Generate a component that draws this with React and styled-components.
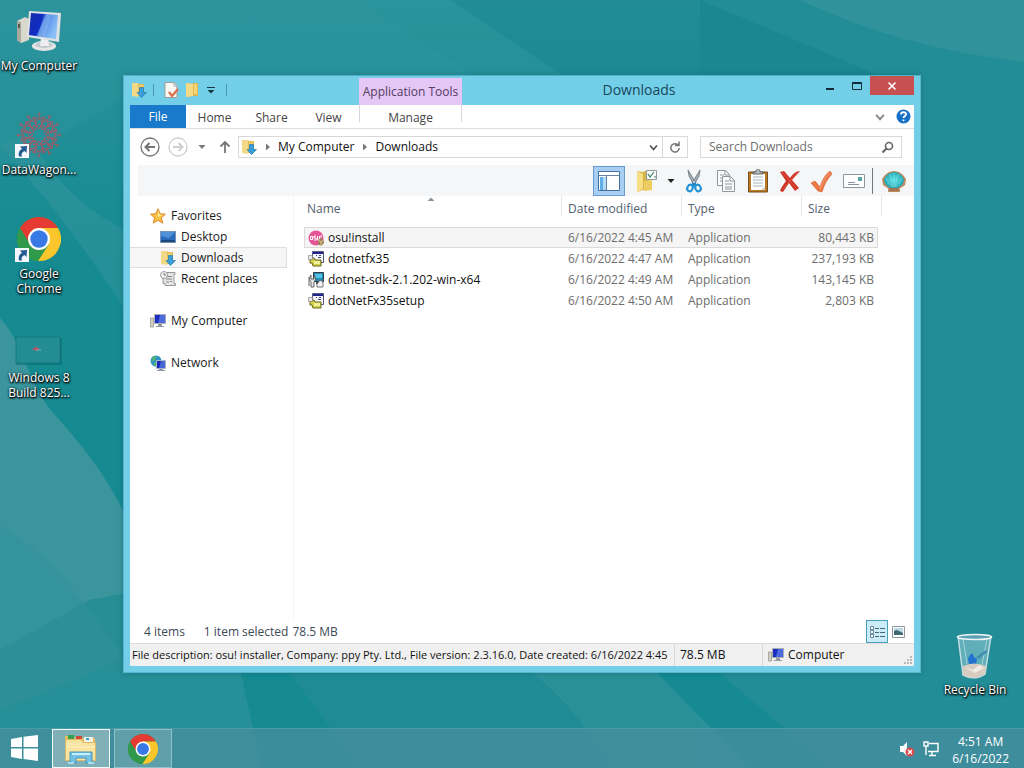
import React from "react";
import styled, { createGlobalStyle } from "styled-components";

const GlobalStyle = createGlobalStyle`
    *, *::before, *::after {
        box-sizing: border-box;
    }
    body {
        margin: 0;
        font-family: "Open Sans", "Noto Sans", sans-serif;
        font-size: 12px;
        line-height: 16px;
        color: #1a1a1a;
    }
    button, input {
        font: inherit;
        color: inherit;
        border: none;
        background: none;
        padding: 0;
        margin: 0;
        outline: none;
    }
    svg {
        display: block;
        flex: none;
    }
`;

const Screen = styled.div`
    position: relative;
    isolation: isolate;
    min-height: 100vh;
    display: flex;
    flex-direction: column;
    overflow: hidden;
    background-color: #17898f;
`;

const WallpaperSvg = styled.svg`
    position: absolute;
    inset: 0;
    width: 100%;
    height: 100%;
    z-index: -1;
`;

const DesktopArea = styled.main`
    flex: 1;
    display: grid;
    grid-template-columns: 123px minmax(0, 1fr) 103px;
`;

const IconColumn = styled.div`
    display: flex;
    flex-direction: column;
    justify-content: ${(p) => (p.$bottom ? "flex-end" : "flex-start")};
    align-items: ${(p) => (p.$bottom ? "flex-end" : "flex-start")};
    padding: ${(p) => (p.$bottom ? "0 10px 0 0" : "8px 0 0")};
`;

const DesktopIcon = styled.button`
    width: 78px;
    height: ${(p) => (p.$short ? 96 : 104)}px;
    display: flex;
    flex-direction: column;
    align-items: center;
    cursor: default;
`;

const IconLabel = styled.span`
    margin-top: 2px;
    line-height: 15px;
    color: #fff;
    text-align: center;
    white-space: pre-line;
    text-shadow: 1px 1px 2px #000, 0 1px 2px #000, 0 0 3px #00000099;
`;

const ExplorerWindow = styled.section`
    display: flex;
    flex-direction: column;
    margin: 75px 0 55px;
    padding: 0 6px 6px;
    min-width: 0;
    background-color: #73cfe8;
    border: 1px solid #59b4cd;
    border-top-color: #4fb0c8;
    box-shadow: 0 0 5px #0e5f6a88;
`;

const TitleBar = styled.header`
    display: flex;
    height: 29px;
`;

const QuickAccess = styled.div`
    flex: 0 0 229px;
    display: flex;
    align-items: center;
    padding-bottom: 2px;
`;

const QuickButton = styled.button`
    width: ${(p) => p.$width || 21}px;
    height: 20px;
    display: flex;
    align-items: center;
    justify-content: center;
`;

const QuickDivider = styled.span`
    width: 1px;
    height: 12px;
    margin: 0 6px;
    background-color: #4a98b0;
`;

const ToolsLabel = styled.div`
    flex: 0 0 103px;
    margin-top: 2px;
    padding-top: 6px;
    text-align: center;
    color: #51405f;
    background-color: #e5c6f5;
`;

const WindowTitle = styled.h1`
    flex: 1;
    margin: 0;
    padding-top: 4px;
    font-size: 14px;
    font-weight: 400;
    line-height: 20px;
    text-align: center;
    color: #17485a;
`;

const WindowButton = styled.button`
    width: ${(p) => (p.$close ? 44 : 27)}px;
    height: 19px;
    display: flex;
    align-items: center;
    justify-content: center;
    background-color: ${(p) => (p.$close ? "#c75052" : "transparent")};
`;

const WindowContent = styled.div`
    flex: 1;
    display: flex;
    flex-direction: column;
    background-color: #fff;
`;

const RibbonTabs = styled.nav`
    display: flex;
    height: 24px;
    border-bottom: 1px solid #dcdddf;
`;

const RibbonTab = styled.button`
    width: 57px;
    padding-top: 3px;
    color: #444;
`;

const FileTab = styled(RibbonTab)`
    width: 56px;
    padding-top: 1px;
    color: #fff;
    background-color: #1979ca;
`;

const ContextTab = styled(RibbonTab)`
    width: 103px;
    height: 17px;
    margin: 0 0 0 2px;
    padding-top: 5px;
    border: solid #dcd3e2;
    border-width: 0 1px;
`;

const RibbonExtras = styled.div`
    display: flex;
    align-items: center;
    gap: 11px;
    margin-left: auto;
    padding-right: 3px;
`;

const AddressRow = styled.div`
    display: flex;
    align-items: center;
    height: 36px;
    padding: 0 12px 0 10px;
`;

const HistoryButtons = styled.div`
    flex: 0 0 98px;
    display: flex;
    align-items: center;
`;

const HistoryButton = styled.button`
    width: ${(p) => p.$width || 28}px;
    padding-left: ${(p) => p.$inset || 0}px;
`;

const AddressBox = styled.div`
    flex: 1;
    min-width: 0;
    display: flex;
    height: 22px;
    border: 1px solid #d9d9d9;
`;

const Crumbs = styled.div`
    flex: 1;
    display: flex;
    align-items: center;
    padding-left: 2px;
`;

const Crumb = styled.button`
    color: #111;
`;

const CrumbArrow = styled.span`
    width: 21px;
    display: flex;
    justify-content: center;
`;

const AddressButton = styled.button`
    width: ${(p) => (p.$divided ? 25 : 18)}px;
    display: flex;
    align-items: center;
    justify-content: center;
    border-left: ${(p) => (p.$divided ? "1px solid #d9d9d9" : "none")};
`;

const SearchBox = styled.label`
    flex: 0 1 202px;
    display: flex;
    align-items: center;
    height: 22px;
    margin-left: 12px;
    padding: 0 7px 0 8px;
    border: 1px solid #d9d9d9;
`;

const SearchInput = styled.input`
    flex: 1;
    min-width: 0;
    &::placeholder {
        color: #6d6d6d;
        opacity: 1;
    }
`;

const Toolbar = styled.div`
    display: flex;
    justify-content: flex-end;
    height: 31px;
    margin: 0 0 0 8px;
    padding: 1px 4px 0 0;
    background-color: #f5f6f7;
`;

const ToolButton = styled.button`
    width: ${(p) => (p.$narrow ? 15 : 32)}px;
    height: 30px;
    display: flex;
    align-items: center;
    justify-content: center;
    margin-right: ${(p) => (p.$active ? 6 : 0)}px;
    border: ${(p) => (p.$active ? "1px solid #669ccf" : "none")};
    background-color: ${(p) => (p.$active ? "#a8cef3" : "transparent")};
`;

const ToolDivider = styled.span`
    width: 1px;
    height: 26px;
    margin: 2px 5px 0 2px;
    background-color: #777;
`;

const Panes = styled.div`
    flex: 1;
    display: flex;
`;

const Sidebar = styled.nav`
    flex: 0 0 164px;
    padding-top: 9px;
    border-right: 1px solid #f5f5f5;
`;

const NavGroup = styled.div`
    margin-bottom: 21px;
`;

const NavItem = styled.button`
    width: 157px;
    height: 21px;
    display: flex;
    align-items: center;
    gap: 5px;
    padding-left: ${(p) => (p.$nested ? 30 : 20)}px;
    border: 1px solid ${(p) => (p.$selected ? "#dedede" : "transparent")};
    border-left: none;
    background-color: ${(p) => (p.$selected ? "#f6f6f6" : "transparent")};
`;

const FilePane = styled.div`
    flex: 1;
    padding-left: 10px;
`;

const FileTable = styled.table`
    width: 578px;
    table-layout: fixed;
    border-collapse: separate;
    border-spacing: 0;
`;

const HeadCell = styled.th`
    position: relative;
    height: 31px;
    padding: 5px 0 0 ${(p) => (p.$first ? 3 : 6)}px;
    vertical-align: top;
    text-align: left;
    font-weight: 400;
    color: #52606f;
    &::after {
        content: "";
        position: absolute;
        top: 0;
        right: 0;
        height: 20px;
        border-right: 1px solid ${(p) => (p.$plain ? "transparent" : "#e6e6e6")};
    }
`;

const SortMark = styled.span`
    position: absolute;
    top: 1px;
    left: 123px;
`;

const FileRow = styled.tr`
    td {
        background-color: ${(p) => (p.$selected ? "#f5f5f5" : "transparent")};
        border: solid ${(p) => (p.$selected ? "#dadada" : "transparent")};
        border-width: 1px 0;
    }
    td:first-child {
        border-left-width: 1px;
    }
    td:last-child {
        border-right-width: 1px;
    }
`;

const Cell = styled.td`
    height: 21px;
    padding: 0 3px 0 6px;
    color: #6d6d6d;
    text-align: ${(p) => (p.$right ? "right" : "left")};
    white-space: nowrap;
`;

const NameCell = styled(Cell)`
    padding-left: 3px;
    color: #111;
`;

const FileName = styled.span`
    display: flex;
    align-items: center;
    gap: 4px;
`;

const DetailsBar = styled.div`
    display: flex;
    align-items: center;
    height: 23px;
    padding: 0 8px 0 14px;
    color: #3d4a57;
`;

const DetailsText = styled.span`
    margin-right: ${(p) => p.$gap || 0}px;
`;

const ViewButtons = styled.div`
    display: flex;
    gap: 3px;
    margin-left: auto;
`;

const ViewButton = styled.button`
    width: ${(p) => (p.$active ? 22 : 15)}px;
    height: 23px;
    display: flex;
    align-items: center;
    justify-content: center;
    border: ${(p) => (p.$active ? "1px solid #4c9fb9" : "none")};
    background-color: ${(p) => (p.$active ? "#c9ecf8" : "transparent")};
`;

const StatusBar = styled.footer`
    display: flex;
    height: 23px;
    border-top: 1px solid #dcdcdc;
    background-color: #f0f0f0;
    color: #111;
`;

const StatusCell = styled.div`
    flex: ${(p) => (p.$width ? `0 0 ${p.$width}px` : "1 1 0")};
    min-width: 0;
    display: flex;
    align-items: center;
    gap: 4px;
    padding-left: 5px;
    border-left: 1px solid #d7d7d7;
    overflow: hidden;
    white-space: nowrap;
`;

const FileInfoCell = styled(StatusCell)`
    padding-left: 2px;
    border-left: none;
    font-size: 11px;
`;

const Grip = styled.span`
    display: flex;
    align-self: flex-end;
    margin-left: auto;
    padding: 2px;
`;

const Taskbar = styled.footer`
    display: flex;
    height: 40px;
    background-color: #458d9ecc;
    border-top: 1px solid #4a9ba6;
`;

const StartButton = styled.button`
    width: 52px;
    display: flex;
    align-items: center;
    padding: 0 0 2px 11px;
`;

const TaskButton = styled.button`
    width: 58px;
    height: 39px;
    display: flex;
    align-items: center;
    justify-content: center;
    margin-right: 4px;
    border: 1px solid ${(p) => (p.$active ? "#f2fbfc" : "#8fc1c9")};
    background-color: ${(p) => (p.$active ? "#7fafb7" : "#5f9faa")};
`;

const Tray = styled.div`
    display: flex;
    align-items: center;
    gap: 8px;
    margin-left: auto;
    padding-right: 15px;
`;

const Clock = styled.time`
    margin: 2px 0 0 5px;
    line-height: 17px;
    text-align: center;
    white-space: pre-line;
    color: #fff;
`;

const Wallpaper = () => (
    <WallpaperSvg viewBox="0 0 1024 768" preserveAspectRatio="none" aria-hidden="true">
        <defs>
            <linearGradient id="sky" x2="0" y2="1">
                <stop offset="0" stopColor="#2b939b" />
                <stop offset="1" stopColor="#158a91" />
            </linearGradient>
        </defs>
        <rect width="1024" height="768" fill="#158a91" />
        <rect width="1024" height="260" fill="url(#sky)" />
        <path d="M700 0H1024V768H700Z" fill="#228d96" />
        <path d="M0 0H360L480 80L130 95L0 170Z" fill="#2f959d" opacity=".45" />
        <path d="M450 0L570 80H890L700 0Z" fill="#0f8189" opacity=".35" />
        <path d="M800 0H1024V62Q900 48 800 0Z" fill="#36949c" opacity=".7" />
        <path d="M0 145Q75 230 135 325V235Q60 200 30 135Z" fill="#35959d" opacity=".5" />
        <path d="M0 318C25 345 28 385 55 415C100 465 140 520 145 590L90 600L0 650Z" fill="#42979f" opacity=".85" />
        <path d="M0 650L90 600L145 590V650L0 710Z" fill="#278e96" />
        <path d="M0 525Q60 560 125 660L238 660L262 768H0Z" fill="#31929b" opacity=".65" />
        <path d="M280 660H520Q570 690 610 768H360Z" fill="#1f8c95" />
        <path d="M515 660H645L750 768H610Q575 700 515 660Z" fill="#32939b" opacity=".7" />
        <path d="M645 660H705L830 768H750Z" fill="#168a92" />
    </WallpaperSvg>
);

const ComputerLarge = () => (
    <svg width="48" height="48" viewBox="0 0 48 48">
        <defs>
            <linearGradient id="bigScreen" x2="1" y2=".4">
                <stop offset="0" stopColor="#152da8" />
                <stop offset=".5" stopColor="#102cc5" />
                <stop offset=".55" stopColor="#4a83e6" />
                <stop offset="1" stopColor="#8bc0f6" />
            </linearGradient>
        </defs>
        <path d="M2 13L10 9L14 11V32L6 35L2 32Z" fill="#d9d8cc" />
        <path d="M2 13L6 14V35L2 32Z" fill="#aaa99d" />
        <path d="M3 16h2v4H3z" fill="#555" />
        <ellipse cx="29" cy="38" rx="12" ry="5" fill="#e5e6e5" />
        <ellipse cx="29" cy="37" rx="9" ry="3" fill="#c6cbd0" />
        <path d="M26 30h7l1 8h-9z" fill="#eee" />
        <path d="M14 3L46 5L44 34L12 29Z" fill="#dfe2e5" />
        <path d="M16 5L43 7L41 31L14 27Z" fill="url(#bigScreen)" />
        <path d="M29 6L36 7L30 29L23 28Z" fill="#adcdf3" opacity=".3" />
    </svg>
);

const Shortcut = () => (
    <g>
        <path d="M0 32H14V46H0Z" fill="#f4f8fc" />
        <path d="M4 44.500C3 40.500 4.500 38 7 37L5 34.500L12 34L11.500 41L9.500 39C7 40 6 42 7 44.500Z" fill="#265a91" />
    </g>
);

const DataWagonIcon = () => (
    <svg width="48" height="48" viewBox="0 0 48 48">
        <g fill="none" stroke="#b5505f" strokeWidth="1" opacity=".8">
            {[0, 30, 60, 90, 120, 150, 180, 210, 240, 270, 300, 330].map((angle) => (
                <g key={angle} transform={`translate(24 23) rotate(${angle})`}>
                    <path d="M0 -6L-4 -12L0 -17L4 -12ZM-3 -8L0 -11L3 -8" />
                    <path d="M0 -17V-21M-4 -12L-5 -18M4 -12L5 -18M-5 -18L0 -16L5 -18" />
                    <circle cx="0" cy="-21" r="1" />
                </g>
            ))}
        </g>
        <Shortcut />
    </svg>
);

const ChromeMark = ({ size = 44 }) => (
    <svg width={size} height={size} viewBox="0 0 44 44">
        <circle cx="22" cy="22" r="22" fill="#30994b" />
        <path d="M22 22L3 11A22 22 0 0 1 41 11L22 11Z" fill="#e53b32" />
        <path d="M22 11H41A22 22 0 0 1 21 44L32 27Z" fill="#fbc62c" />
        <path d="M3 11L13 28L22 11Z" fill="#e53b32" />
        <path d="M3 11A22 22 0 0 0 21 44L31 28L13 27Z" fill="#30994b" />
        <circle cx="22" cy="22" r="11" fill="#fff" />
        <circle cx="22" cy="22" r="8.7" fill="#3879e6" />
    </svg>
);

const ChromeLarge = () => (
    <svg width="48" height="48" viewBox="0 0 48 48">
        <svg x="2" y="1">
            <ChromeMark />
        </svg>
        <Shortcut />
    </svg>
);

const BuildThumb = () => (
    <svg width="48" height="48" viewBox="0 0 48 48">
        <path d="M1 17H45V43H1Z" fill="#248d94" stroke="#167b82" />
        <path d="M1 44H46V18" fill="none" stroke="#0b6871" />
        <path d="M17 29l4-2 4 2-4 2z" fill="#b85363" />
        <path d="M21 30h5" stroke="#84a7c9" />
    </svg>
);

const RecycleIcon = () => (
    <svg width="48" height="48" viewBox="0 0 48 48">
        <path d="M7 4L40 4L34 42Q23 49 12 43Z" fill="#8bc4d1" opacity=".6" />
        <path d="M7 4L12 43Q23 49 34 42L40 4" fill="none" stroke="#c4dce3" strokeWidth="1.5" />
        <path d="M12 7L16 32M36 7L31 33" stroke="#d3eef4" opacity=".6" />
        <path d="M18 24l3-3 2 4 3 2-1 6-7-1-1-5z" fill="#2272cf" />
        <path d="M25 25l10-7 1 2-8 7z" fill="#438fae" />
        <path d="M12 34Q23 29 35 34L34 42Q23 49 12 43Z" fill="#d8ccc1" />
        <path d="M13 35l9 3 6-5 5 3-9 5z" fill="#f0eae4" />
        <ellipse cx="23.500" cy="5" rx="17" ry="2.500" fill="#5aa0b2" stroke="#edf4f5" strokeWidth="1.700" />
    </svg>
);

const ComputerSmall = () => (
    <svg width="16" height="16" viewBox="0 0 16 16">
        <path d="M.5 5h3v9h-3z" fill="#d1d0c5" stroke="#929288" strokeWidth=".7" />
        <path d="M4.500 1.500h11v9h-11z" fill="#1b2ec0" stroke="#a9aeb5" />
        <path d="M10 2h5v8H8z" fill="#4c69dd" />
        <path d="M8 11h4v2h2v1H6v-1h2z" fill="#92999f" />
    </svg>
);

const DownloadFolder = () => (
    <svg width="16" height="16" viewBox="0 0 16 16">
        <path d="M1 1h6l1 1h5v12H2z" fill="#e1bc58" />
        <path d="M1 1h6v14l-6-1z" fill="#f3d987" />
        <path d="M8 3h4v10H7z" fill="#efcd69" />
        <path d="M8.500 5.500h4v5h3L10.500 15.500 6 10.500h2.500z" fill="#389edc" stroke="#247cae" strokeWidth=".7" />
    </svg>
);

const FolderSmall = () => (
    <svg width="16" height="16" viewBox="0 0 16 16">
        <path d="M2 1l6 1 1-1h5v13H9l-7 1z" fill="#dfb851" />
        <path d="M2 1l7 1v12l-7 1z" fill="#f6db86" />
        <path d="M10 2h3v10h-3z" fill="#f5d575" />
    </svg>
);

const PropertiesSmall = () => (
    <svg width="16" height="16" viewBox="0 0 16 16">
        <path d="M2 .5h9l3 3v12H2z" fill="#faf8f5" stroke="#a69b96" />
        <path d="M11 1v3h3" fill="none" stroke="#aaa" />
        <path d="M6 10l3 4 6-7" fill="none" stroke="#dc704a" strokeWidth="2.300" />
    </svg>
);

const DesktopSmall = () => (
    <svg width="16" height="16" viewBox="0 0 16 16">
        <path d="M.5 2.500h15v11H.5z" fill="#286bb9" stroke="#7593b8" />
        <path d="M1 3h14L9 9 1 7z" fill="#5090d8" />
        <path d="M1 11h14v2H1z" fill="#1b477f" />
    </svg>
);

const StarIcon = () => (
    <svg width="16" height="16" viewBox="0 0 16 16">
        <path d="M8 .7l2.100 5 5.300.5-4 3.600 1.300 5.300L8 12.300l-4.700 2.800 1.300-5.300-4-3.600 5.300-.5z" fill="#f9c244" stroke="#df8327" />
        <path d="M8 2l1.500 4.500L13 7 8 9z" fill="#ffe898" />
    </svg>
);

const RecentIcon = () => (
    <svg width="16" height="16" viewBox="0 0 16 16">
        <path d="M4 1.500h11v2h-1v9h1.500v2H5v-2H3V4z" fill="#e5e5e5" stroke="#979797" />
        <path d="M7 5.500h5M6 8h6M6 11h3M10 10.500h2" stroke="#858585" />
        <circle cx="4" cy="4" r="3.500" fill="#f2f2f2" stroke="#9b9b9b" />
        <path d="M4 2v2h2" fill="none" stroke="#777" />
    </svg>
);

const NetworkIcon = () => (
    <svg width="16" height="16" viewBox="0 0 16 16">
        <circle cx="6" cy="6" r="5.500" fill="#2f8fc9" />
        <path d="M3 1l4 1-2 3-4 2zM6 6l4 1-4 5-3-3z" fill="#4eb475" />
        <path d="M6.500 5.500h9v8h-9z" fill="#1628b5" stroke="#a8b5c4" />
        <path d="M11 6h4v7H9z" fill="#4965d5" />
        <path d="M9 14h4v1h2v1H7v-1h2z" fill="#8e969e" />
    </svg>
);

const OsuIcon = () => (
    <svg width="16" height="16" viewBox="0 0 16 16">
        <circle cx="8" cy="8" r="7.500" fill="#e65596" />
        <path d="M2.500 6.500h2v3h-2zM8 6H6v2h2v2H6M9.500 6v4h2V6M13 5v3" fill="none" stroke="#fff" />
        <path d="M10 10l3-2 3 2v3l-3 3-3-2z" fill="#9c7e58" />
        <path d="M10 10l3 2v4M13 12l3-2" stroke="#e0c68b" fill="none" />
    </svg>
);

const SetupIcon = () => (
    <svg width="16" height="16" viewBox="0 0 16 16">
        <path d="M4.500.5h11v11h-11z" fill="#f5f5f5" stroke="#555780" />
        <path d="M5 1h10v2H5z" fill="#20258e" />
        <path d="M8 4h1v1H8zM11 4h2v1h-2zM10 6h3v1h-3z" fill="#3d4a8b" />
        <path d="M2 7h4l1 2h6v6H5l-1-3H2z" fill="#d3d14c" stroke="#68691e" />
        <path d="M.5 4.500h4v4h-4z" fill="#e8e8e8" stroke="#777" strokeWidth=".6" />
        <path d="M6 10h6v3H6z" fill="#f2ef9b" />
    </svg>
);

const SdkIcon = () => (
    <svg width="16" height="16" viewBox="0 0 16 16">
        <path d="M5.500.5h10v9h-10z" fill="#278ab3" stroke="#333c42" />
        <path d="M7 2h7v4H7z" fill="#52c4e8" />
        <path d="M8 10h5v2H8z" fill="#464646" />
        <path d="M3 3c-2 2-2 5 0 7v5h3v-5c2-2 2-5 0-7v4H3z" fill="#e2e5e7" stroke="#424242" strokeWidth=".8" />
        <path d="M9 12l3-4 3 2v5H9z" fill="#f2f2f2" stroke="#555" strokeWidth=".8" />
        <path d="M1 5v9" stroke="#666" />
    </svg>
);

const Chevron = ({ color = "#555", size = 9 }) => (
    <svg width={size} height={size} viewBox="0 0 9 9">
        <path d="M1 2.500L4.500 6.500L8 2.500" fill="none" stroke={color} strokeWidth="1.700" />
    </svg>
);

const Triangle = ({ color = "#222", right }) => (
    <svg width="8" height="8" viewBox="0 0 8 8">
        <path d={right ? "M2 0.5L6 4L2 7.5Z" : "M0.500 2H7.500L4 6Z"} fill={color} />
    </svg>
);

const ArrowCircle = ({ forward }) => (
    <svg width="20" height="20" viewBox="0 0 20 20">
        <g
            transform={forward ? "matrix(-1 0 0 1 20 0)" : undefined}
            fill="none"
            stroke={forward ? "#cfcfcf" : "#747474"}
        >
            <circle cx="10" cy="10" r="9" strokeWidth="1.300" />
            <path d="M15 10H6M9.500 6L5.500 10L9.500 14" strokeWidth="2" />
        </g>
    </svg>
);

const PaneIcon = () => (
    <svg width="24" height="24" viewBox="0 0 24 24">
        <path d="M1.500 2.500h21v19h-21z" fill="#fff" stroke="#446f9a" />
        <path d="M2 6.500h20M9.500 7v14" stroke="#6683a4" />
        <path d="M3 8h6v13H3z" fill="#62aee7" />
        <path d="M6 8h3v13H6z" fill="#b0daf5" />
    </svg>
);

const FolderOptionsIcon = () => (
    <svg width="24" height="24" viewBox="0 0 24 24">
        <path d="M2 2l6 1 2-1h4v19H8l-6 2z" fill="#d8b54b" />
        <path d="M2 2l6 3v15l-6 3z" fill="#f6df85" />
        <path d="M9 12l8-1v10l-8 1z" fill="#edcc60" />
        <path d="M11.500 1.500h10v9h-10z" fill="#f7faf8" stroke="#8d9a9b" />
        <path d="M13 5l2 3 4-5M19 8h2" fill="none" stroke="#397b63" strokeWidth="1.200" />
    </svg>
);

const ScissorsIcon = () => (
    <svg width="24" height="24" viewBox="0 0 24 24">
        <path d="M6 1l1 6 5 9 2-2zM18 1l-1 6-5 9-2-2z" fill="#a6b1b9" stroke="#65747e" strokeWidth=".8" />
        <path d="M12 14l-2 3M12 14l2 3" stroke="#2586c5" strokeWidth="3" />
        <ellipse cx="8" cy="19" rx="2.600" ry="3.300" transform="rotate(25 8 19)" fill="none" stroke="#2393d5" strokeWidth="2.200" />
        <ellipse cx="16" cy="19" rx="2.600" ry="3.300" transform="rotate(-25 16 19)" fill="none" stroke="#2393d5" strokeWidth="2.200" />
    </svg>
);

const CopyIcon = () => (
    <svg width="24" height="24" viewBox="0 0 24 24">
        <g fill="#fafafa" stroke="#8b969d">
            <path d="M3.500 1.500h8l4 4v11h-12z" />
            <path d="M11 2v4h4M6 6h4M6 9h7M6 12h7" fill="none" />
            <path d="M8.500 7.500h8l4 4v11h-12z" />
            <path d="M16 8v4h4M11 12h4M11 15h7M11 18h7M11 20h7" fill="none" />
        </g>
    </svg>
);

const ClipboardIcon = () => (
    <svg width="24" height="24" viewBox="0 0 24 24">
        <path d="M2.500 3h19v20h-19z" fill="#b87824" stroke="#765023" />
        <path d="M5 5h14v16H5z" fill="#fff" />
        <path d="M7 8h10M7 11h10M7 14h10M7 17h10" stroke="#a2b4be" />
        <path d="M7 5V3h3c0-4 4-4 4 0h3v2z" fill="#b9c0c1" stroke="#575f61" />
        <path d="M15 21l4-4v4z" fill="#d3d4d1" />
    </svg>
);

const DeleteIcon = () => (
    <svg width="24" height="24" viewBox="0 0 24 24">
        <path d="M2 3l4-1 6 7c3-4 6-7 10-7l-8 9 7 8-4 3-6-8-6 9-3-1c1-4 4-7 6-10z" fill="#cd3425" />
        <path d="M4 3l15 17M19 4L5 20" stroke="#e5614b" strokeWidth=".8" />
    </svg>
);

const CheckIcon = () => (
    <svg width="24" height="24" viewBox="0 0 24 24">
        <path d="M1 14l4-2 5 6C12 11 16 5 20 2l2 3c-5 5-8 11-10 18L8 22z" fill="#ed7843" stroke="#ce5f2e" strokeWidth=".6" />
        <path d="M10 20c2-6 5-12 10-16" fill="none" stroke="#f5a37e" />
    </svg>
);

const MailIcon = () => (
    <svg width="24" height="24" viewBox="0 0 24 24">
        <path d="M1.500 5.500h21v13h-21z" fill="#fff" stroke="#8d969b" />
        <path d="M16 8h4v4h-4z" fill="#56a4aa" />
        <path d="M6 13.500h7M6 15.500h11" stroke="#8794a0" />
    </svg>
);

const ShellIcon = () => (
    <svg width="26" height="24" viewBox="0 0 26 24">
        <defs>
            <radialGradient id="shellGlow">
                <stop offset="0" stopColor="#5be3e8" />
                <stop offset="1" stopColor="#25a5b4" />
            </radialGradient>
        </defs>
        <path d="M8 20L2 16L1 10L4 6L8 3L13 2L18 3L22 6L25 10L24 16L18 20L19 23H7Z" fill="#b98a5c" />
        <path d="M9 19L4 15L3 10L6 6L9 4L13 3L17 4L20 6L23 10L22 15L17 19Z" fill="url(#shellGlow)" />
        <path d="M13 4v14M9 5l3 13M17 5l-3 13M5 9l6 9M21 9l-6 9" stroke="#8be8ea" strokeWidth=".6" fill="none" />
        <path d="M8 19h10l1 3H7z" fill="#a87553" />
    </svg>
);

const DetailsViewIcon = () => (
    <svg width="16" height="14" viewBox="0 0 16 14">
        <path d="M1.500 1.500h3v3h-3zM1.500 5.500h3v3h-3zM1.500 9.500h3v3h-3z" fill="#fff" stroke="#69899c" />
        <path d="M6 3.500h4M11 3.500h5M6 7.500h4M11 7.500h5M6 11.500h4M11 11.500h5" stroke="#476577" />
    </svg>
);

const PreviewViewIcon = () => (
    <svg width="13" height="12" viewBox="0 0 13 12">
        <path d="M.5.5h12v11H.5z" fill="#fff" stroke="#8d989e" />
        <path d="M2 2h9v7H2z" fill="#b9d9e7" />
        <path d="M2 5l3-1 6 3v2H2z" fill="#3f6872" />
    </svg>
);

const ExplorerIcon = () => (
    <svg width="34" height="32" viewBox="0 0 34 32">
        <path d="M1 3h8l2 2h20v22H1z" fill="#e7bd60" />
        <path d="M4 2h6v4H4z" fill="#37a24c" />
        <path d="M12 3h6v3h-6z" fill="#d44836" />
        <path d="M20 4h9v5h-9z" fill="#f3f2e8" />
        <path d="M22 5h3v2h-3z" fill="#38a0cf" />
        <path d="M1.500 6.500h15l3 3h12v18h-30z" fill="#f8e39f" stroke="#dcb96a" />
        <path d="M3 14h28M3 11h15" stroke="#fff1c5" />
        <path d="M6 19h22v11h-6v-5H12v5H6z" fill="#73c2e5" stroke="#4897bd" />
        <path d="M8 20h18v2H8z" fill="#c9effb" />
        <path d="M4 29h6v2H4zM24 29h6v2h-6z" fill="#a9deef" />
    </svg>
);

const VolumeIcon = () => (
    <svg width="16" height="16" viewBox="0 0 16 16">
        <path d="M1 5h3l4-4v14l-4-4H1z" fill="#fff" />
        <circle cx="11" cy="11" r="4.500" fill="#d44a4c" />
        <path d="M9 9l4 4M13 9l-4 4" stroke="#fff" strokeWidth="1.500" />
    </svg>
);

const TrayNetworkIcon = () => (
    <svg width="16" height="16" viewBox="0 0 16 16">
        <path d="M6 2.500h9v8H5M9 11v3M6 14.500h7" fill="none" stroke="#fff" strokeWidth="1.400" />
        <path d="M1 1h4v4H1zM3 5v9" fill="none" stroke="#fff" strokeWidth="1.400" />
    </svg>
);

const desktopIcons = [
    { label: "My Computer", Icon: ComputerLarge },
    { label: "DataWagon...", Icon: DataWagonIcon },
    { label: "Google\nChrome", Icon: ChromeLarge },
    { label: "Windows 8\nBuild 825...", Icon: BuildThumb },
];

const files = [
    { name: "osu!install", date: "6/16/2022 4:45 AM", size: "80,443 KB", Icon: OsuIcon, selected: true },
    { name: "dotnetfx35", date: "6/16/2022 4:47 AM", size: "237,193 KB", Icon: SetupIcon },
    { name: "dotnet-sdk-2.1.202-win-x64", date: "6/16/2022 4:49 AM", size: "143,145 KB", Icon: SdkIcon },
    { name: "dotNetFx35setup", date: "6/16/2022 4:50 AM", size: "2,803 KB", Icon: SetupIcon },
];

const tools = [
    { label: "Cut", Icon: ScissorsIcon },
    { label: "Copy", Icon: CopyIcon },
    { label: "Paste", Icon: ClipboardIcon },
    { label: "Delete", Icon: DeleteIcon },
    { label: "Rename", Icon: CheckIcon },
    { label: "Send", Icon: MailIcon },
];

const WindowHeader = () => (
    <TitleBar>
        <QuickAccess>
            <QuickButton $width={17} aria-label="Window menu"><DownloadFolder /></QuickButton>
            <QuickDivider />
            <QuickButton aria-label="Properties"><PropertiesSmall /></QuickButton>
            <QuickButton aria-label="New folder"><FolderSmall /></QuickButton>
            <QuickButton $width={18} aria-label="Customize toolbar">
                <svg width="8" height="8" viewBox="0 0 8 8">
                    <path d="M0 1.500h8" stroke="#173744" />
                    <path d="M.5 4h7L4 7.500z" fill="#173744" />
                </svg>
            </QuickButton>
            <QuickDivider />
        </QuickAccess>
        <ToolsLabel>Application Tools</ToolsLabel>
        <WindowTitle>Downloads</WindowTitle>
        <WindowButton aria-label="Minimize">
            <svg width="12" height="12" viewBox="0 0 12 12">
                <path d="M2 9h8" stroke="#112e38" strokeWidth="2" />
            </svg>
        </WindowButton>
        <WindowButton aria-label="Maximize">
            <svg width="12" height="12" viewBox="0 0 12 12">
                <path d="M1.500 2.500h9v7h-9zM1 3.500h10" fill="none" stroke="#112e38" />
            </svg>
        </WindowButton>
        <WindowButton $close aria-label="Close">
            <svg width="10" height="10" viewBox="0 0 10 10">
                <path d="M1.500 1.500l7 7M8.500 1.500l-7 7" stroke="#fff" strokeWidth="1.600" />
            </svg>
        </WindowButton>
    </TitleBar>
);

const Ribbon = () => (
    <RibbonTabs>
        <FileTab>File</FileTab>
        <RibbonTab>Home</RibbonTab>
        <RibbonTab>Share</RibbonTab>
        <RibbonTab>View</RibbonTab>
        <ContextTab>Manage</ContextTab>
        <RibbonExtras>
            <button aria-label="Expand ribbon"><Chevron color="#888" size={10} /></button>
            <button aria-label="Help">
                <svg width="15" height="15" viewBox="0 0 15 15">
                    <circle cx="7.500" cy="7.500" r="7" fill="#1670c7" />
                    <path d="M5 5.500C5 2.500 10 2.500 10 5.500C10 7 7.500 7 7.500 9M7.500 10.500v1.700" fill="none" stroke="#fff" strokeWidth="1.800" />
                </svg>
            </button>
        </RibbonExtras>
    </RibbonTabs>
);

const AddressBar = () => (
    <AddressRow>
        <HistoryButtons>
            <HistoryButton aria-label="Back"><ArrowCircle /></HistoryButton>
            <HistoryButton aria-label="Forward"><ArrowCircle forward /></HistoryButton>
            <HistoryButton $width={23} $inset={2} aria-label="Recent locations"><Triangle color="#777" /></HistoryButton>
            <HistoryButton $width={12} aria-label="Up">
                <svg width="12" height="14" viewBox="0 0 12 14">
                    <path d="M6 13V2M1.500 6.500L6 2L10.500 6.500" fill="none" stroke="#777" strokeWidth="1.800" />
                </svg>
            </HistoryButton>
        </HistoryButtons>
        <AddressBox>
            <Crumbs>
                <DownloadFolder />
                <CrumbArrow><Triangle right color="#777" /></CrumbArrow>
                <Crumb>My Computer</Crumb>
                <CrumbArrow><Triangle right color="#777" /></CrumbArrow>
                <Crumb>Downloads</Crumb>
            </Crumbs>
            <AddressButton aria-label="Previous locations"><Chevron /></AddressButton>
            <AddressButton $divided aria-label="Refresh">
                <svg width="12" height="12" viewBox="0 0 12 12">
                    <path d="M9.500 4.500A4.200 4.200 0 1 0 10.200 7M6 4.500h4V.5" fill="none" stroke="#777" strokeWidth="1.500" />
                </svg>
            </AddressButton>
        </AddressBox>
        <SearchBox>
            <SearchInput type="text" placeholder="Search Downloads" aria-label="Search Downloads" />
            <svg width="13" height="13" viewBox="0 0 13 13">
                <circle cx="8" cy="5" r="3.500" fill="none" stroke="#666" strokeWidth="1.600" />
                <path d="M5.500 7.500L1.500 11.500" stroke="#666" strokeWidth="2.200" />
            </svg>
        </SearchBox>
    </AddressRow>
);

const ClassicToolbar = () => (
    <Toolbar>
        <ToolButton $active aria-label="Navigation pane"><PaneIcon /></ToolButton>
        <ToolButton aria-label="Folder options"><FolderOptionsIcon /></ToolButton>
        <ToolButton $narrow aria-label="More options"><Triangle /></ToolButton>
        {tools.map(({ label, Icon }) => (
            <ToolButton key={label} aria-label={label}><Icon /></ToolButton>
        ))}
        <ToolDivider />
        <ToolButton aria-label="Classic shell"><ShellIcon /></ToolButton>
    </Toolbar>
);

const NavigationPane = () => (
    <Sidebar>
        <NavGroup>
            <NavItem><StarIcon />Favorites</NavItem>
            <NavItem $nested><DesktopSmall />Desktop</NavItem>
            <NavItem $nested $selected><DownloadFolder />Downloads</NavItem>
            <NavItem $nested><RecentIcon />Recent places</NavItem>
        </NavGroup>
        <NavGroup>
            <NavItem><ComputerSmall />My Computer</NavItem>
        </NavGroup>
        <NavGroup>
            <NavItem><NetworkIcon />Network</NavItem>
        </NavGroup>
    </Sidebar>
);

const FileList = () => (
    <FilePane>
        <FileTable>
            <colgroup>
                <col width="258" />
                <col width="120" />
                <col width="120" />
                <col width="76" />
                <col width="4" />
            </colgroup>
            <thead>
                <tr>
                    <HeadCell $first>
                        Name
                        <SortMark>
                            <svg width="8" height="5" viewBox="0 0 8 5">
                                <path d="M.5 4L4 .5L7.500 4z" fill="#8b939a" />
                            </svg>
                        </SortMark>
                    </HeadCell>
                    <HeadCell>Date modified</HeadCell>
                    <HeadCell>Type</HeadCell>
                    <HeadCell $plain>Size</HeadCell>
                    <HeadCell as="td" />
                </tr>
            </thead>
            <tbody>
                {files.map(({ name, date, size, Icon, selected }) => (
                    <FileRow key={name} $selected={selected}>
                        <NameCell><FileName><Icon />{name}</FileName></NameCell>
                        <Cell>{date}</Cell>
                        <Cell>Application</Cell>
                        <Cell $right>{size}</Cell>
                    </FileRow>
                ))}
            </tbody>
        </FileTable>
    </FilePane>
);

const App = () => (
    <>
        <GlobalStyle />
        <Screen>
            <Wallpaper />
            <DesktopArea>
                <IconColumn>
                    {desktopIcons.map(({ label, Icon }) => (
                        <DesktopIcon key={label}>
                            <Icon />
                            <IconLabel>{label}</IconLabel>
                        </DesktopIcon>
                    ))}
                </IconColumn>
                <ExplorerWindow>
                    <WindowHeader />
                    <WindowContent>
                        <Ribbon />
                        <AddressBar />
                        <ClassicToolbar />
                        <Panes>
                            <NavigationPane />
                            <FileList />
                        </Panes>
                        <DetailsBar>
                            <DetailsText $gap={19}>4 items</DetailsText>
                            <DetailsText $gap={4}>1 item selected</DetailsText>
                            <DetailsText>78.5 MB</DetailsText>
                            <ViewButtons>
                                <ViewButton $active aria-label="Details view"><DetailsViewIcon /></ViewButton>
                                <ViewButton aria-label="Thumbnail view"><PreviewViewIcon /></ViewButton>
                            </ViewButtons>
                        </DetailsBar>
                        <StatusBar>
                            <FileInfoCell>
                                File description: osu! installer, Company: ppy Pty. Ltd., File version: 2.3.16.0, Date created: 6/16/2022 4:45
                            </FileInfoCell>
                            <StatusCell $width={88}>78.5 MB</StatusCell>
                            <StatusCell $width={152}>
                                <ComputerSmall />Computer
                                <Grip>
                                    <svg width="9" height="9" viewBox="0 0 9 9">
                                        <path d="M7 1h2v2H7zM4 4h2v2H4zM7 4h2v2H7zM1 7h2v2H1zM4 7h2v2H4zM7 7h2v2H7z" fill="#b8b8b8" />
                                    </svg>
                                </Grip>
                            </StatusCell>
                        </StatusBar>
                    </WindowContent>
                </ExplorerWindow>
                <IconColumn $bottom>
                    <DesktopIcon $short>
                        <RecycleIcon />
                        <IconLabel>Recycle Bin</IconLabel>
                    </DesktopIcon>
                </IconColumn>
            </DesktopArea>
            <Taskbar>
                <StartButton aria-label="Start">
                    <svg width="27" height="26" viewBox="0 0 27 26">
                        <path d="M0 4L11 2V12H0ZM12.500 1.700L27 0V12H12.500ZM0 13.500H11V24L0 22ZM12.500 13.500H27V26L12.500 24Z" fill="#fff" />
                    </svg>
                </StartButton>
                <TaskButton $active aria-label="File Explorer"><ExplorerIcon /></TaskButton>
                <TaskButton aria-label="Google Chrome"><ChromeMark size={30} /></TaskButton>
                <Tray>
                    <VolumeIcon />
                    <TrayNetworkIcon />
                    <Clock>{"4:51 AM\n6/16/2022"}</Clock>
                </Tray>
            </Taskbar>
        </Screen>
    </>
);

export default App;
